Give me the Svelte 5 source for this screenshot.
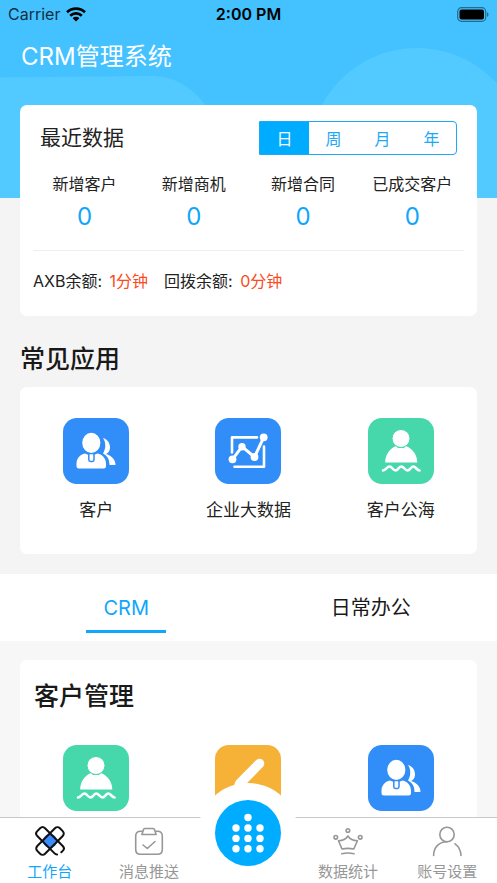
<script>
  const ranges = ['日', '周', '月', '年'];
  const stats = [
    { label: '新增客户', value: 0 },
    { label: '新增商机', value: 0 },
    { label: '新增合同', value: 0 },
    { label: '已成交客户', value: 0 }
  ];
  const apps = [
    { icon: 'customer', label: '客户' },
    { icon: 'chart', label: '企业大数据' },
    { icon: 'sea', label: '客户公海' }
  ];
  const tabs = ['CRM', '日常办公'];
  const manage = ['sea', 'pencil', 'customer'];
  const nav = [
    { icon: 'work', label: '工作台' },
    { icon: 'message', label: '消息推送' },
    { icon: 'dial' },
    { icon: 'crown', label: '数据统计' },
    { icon: 'user', label: '账号设置' }
  ];

  let range = $state('日');
  let tab = $state('CRM');
  let page = $state('work');
</script>

{#snippet appIcon(name)}
  <svg class="tile tile--{name}" viewBox="0 0 66 66" fill="none" aria-hidden="true">
    {#if name === 'customer'}
      <path d="M40 20c4 1 7 4.500 7 9.500 0 3-1.500 5.500-4 6.500 6 2 9.500 5.500 9.500 11H46.500c0-6-2-9-6.500-11.500 3-5 3-11 0-15.500z" fill="#fff" />
      <path d="M22 35.500c-5 1-8.500 5-8.500 10v2.500q0 2.500 2.500 2.500h24.500q2.500 0 2.500-2.500v-2.500c0-5-3.500-9-8.500-10q-6.500 3-12.500 0z" fill="#fff" />
      <rect x="25.800" y="35" width="5.200" height="8.400" rx="1.600" fill="#fff" stroke="#318df7" stroke-width="1.500" />
      <ellipse cx="28.300" cy="24.800" rx="9.800" ry="10.800" fill="#fff" stroke="#318df7" stroke-width="1.400" />
    {:else if name === 'chart'}
      <path d="M17 34.500V19.400H42M49 28.500v20.200H19.500" stroke="#fff" stroke-width="2.600" stroke-linecap="round" stroke-linejoin="round" />
      <path d="M17.500 41.300 27 28.700 39.500 39 48.700 19.300" stroke="#fff" stroke-width="3" />
      <g fill="#fff">
        <circle cx="17.500" cy="41.300" r="3.900" />
        <circle cx="27" cy="28.700" r="3.700" />
        <circle cx="39.500" cy="39" r="3.900" />
        <circle cx="48.700" cy="19.300" r="3.900" />
      </g>
    {:else if name === 'sea'}
      <path d="M17.200 44.500c0-8 4.500-14 11-16.500l2 2h5.600l2-2c6.500 2.500 11.500 8.500 11.500 16.500z" fill="#fff" />
      <circle cx="33" cy="20.500" r="9" fill="#fff" stroke="#46d7ab" />
      <path d="M15 52.500C18 52 19 48.500 21.500 48.500S25 52.500 27.500 52.500 31 48.500 33.300 48.500 37 52.500 39.500 52.500 43 48.500 45.300 48.500 48.500 52 51.500 52.500" stroke="#fff" stroke-width="2.600" stroke-linecap="round" />
    {:else}
      <path d="M41 15.200a4.800 4.800 0 0 1 7 6.600L30 40 17.500 46 20 37.500q.5-1.500 1.700-2.700z" fill="#fff" />
    {/if}
  </svg>
{/snippet}

{#snippet navIcon(name)}
  <svg class="nav__icon" viewBox="0 0 32 32" fill="none" stroke="#979797" stroke-width="1.600" stroke-linecap="round" stroke-linejoin="round" aria-hidden="true">
    {#if name === 'work'}
      <circle cx="16" cy="16" r="7" fill="#3b8cff" stroke="none" />
      <g stroke="#111" stroke-width="2">
        <rect x="0" y="10.500" width="32" height="11" rx="3.500" transform="rotate(-45 16 16)" />
        <path d="M30.500 20.500q-.8 1-2.500 1H3.500q-3.500 0-3.500-3.500v-4q0-3.500 3.500-3.500h25q3.500 0 3.500 3.500v2" transform="rotate(45 16 16)" />
      </g>
    {:else if name === 'message'}
      <path d="M9 6.300H7.500q-4.800 0-4.800 4.800v13.400q0 4.800 4.800 4.800h17q4.800 0 4.800-4.800V11.100q0-4.800-4.800-4.800H23" />
      <path d="M10.500 4.500q.3-1 1.300-1h8.400q1 0 1.300 1l1.600 5H8.900zM10 20l4.300 3.500 7.700-7" />
    {:else if name === 'crown'}
      <circle cx="15.900" cy="5.500" r="1.800" />
      <circle cx="3.800" cy="12.300" r="1.800" />
      <circle cx="28.200" cy="12.300" r="1.800" />
      <path d="M6.500 15.700q6.500 0 9.400-4.700 3 4.700 9.500 4.700l-3.600 8.300q-6-1.200-11.800 0zM9.800 28.700q6-1.500 12.200 0" />
    {:else}
      <circle cx="16" cy="9.500" r="7.200" />
      <path d="M2.600 30.500C2.600 22 8.500 16.700 16 16.700M24 18.800q5.700 4 6 11.700" />
    {/if}
  </svg>
{/snippet}

<div class="page">
  <svg class="backdrop" viewBox="0 0 497 198" preserveAspectRatio="none" aria-hidden="true">
    <path d="M0 77.500 150 76C174 76 191 86 206 106L260 198H0z" fill="#53caff" />
    <circle cx="417" cy="156" r="108" fill="#53caff" />
  </svg>

  <header class="header">
    <div class="status">
      <span class="status__carrier">
        Carrier
        <svg width="20" height="15" viewBox="0 0 20 15" aria-hidden="true">
          <g fill="none" stroke="#000" stroke-width="2.600">
            <path d="M1 5.200a13 13 0 0 1 18 0" />
            <path d="M4.200 8.700a8.300 8.300 0 0 1 11.600 0" />
          </g>
          <path d="M6.600 11.200a4.800 4.800 0 0 1 6.800 0L10 14.600z" />
        </svg>
      </span>
      <strong class="status__time">2:00 PM</strong>
      <svg class="status__battery" width="32" height="15" viewBox="0 0 32 15" aria-hidden="true">
        <rect x="0.700" y="0.700" width="28" height="13.600" rx="3.800" fill="none" stroke="#256b8c" stroke-width="1.200" />
        <rect x="2.500" y="2.500" width="24.500" height="10" rx="2" />
        <path d="M30 5.300q1.500.5 1.500 2.200T30 9.700z" fill="#256b8c" />
      </svg>
    </div>
    <h1 class="title">CRM管理系统</h1>
  </header>

  <main>
    <section class="card recent">
      <div class="recent__head">
        <h2 class="recent__title">最近数据</h2>
        <div class="range">
          {#each ranges as item}
            <button class="range__item" class:active={range === item} onclick={() => (range = item)}>{item}</button>
          {/each}
        </div>
      </div>
      <dl class="stats">
        {#each stats as stat}
          <div class="stats__item">
            <dt>{stat.label}</dt>
            <dd>{stat.value}</dd>
          </div>
        {/each}
      </dl>
      <div class="balance">
        <span>AXB余额: <em>1分钟</em></span>
        <span>回拨余额: <em>0分钟</em></span>
      </div>
    </section>

    <h2 class="heading heading--page">常见应用</h2>
    <section class="card apps">
      {#each apps as app}
        <button class="app">
          {@render appIcon(app.icon)}
          <span>{app.label}</span>
        </button>
      {/each}
    </section>

    <div class="tabs">
      {#each tabs as item}
        <button class="tabs__item" class:active={tab === item} onclick={() => (tab = item)}>
          <span>{item}</span>
        </button>
      {/each}
    </div>

    <div class="panel">
      <section class="card">
        <h2 class="heading heading--card">客户管理</h2>
        <div class="apps">
          {#each manage as icon}
            <button class="app">{@render appIcon(icon)}</button>
          {/each}
        </div>
      </section>
    </div>
  </main>

  <nav class="nav">
    {#each nav as item}
      {#if item.icon === 'dial'}
        <div class="nav__center">
          <button class="dial">
            <svg viewBox="0 0 66 66" fill="#fff" aria-hidden="true">
              <circle cx="33" cy="17.500" r="3.700" />
              {#each [28, 38.400, 48.800] as cy}
                {#each [21, 33, 45] as cx}
                  <circle {cx} {cy} r="3.700" />
                {/each}
              {/each}
            </svg>
          </button>
        </div>
      {:else}
        <button class="nav__item" class:active={page === item.icon} onclick={() => (page = item.icon)}>
          {@render navIcon(item.icon)}
          <span>{item.label}</span>
        </button>
      {/if}
    {/each}
  </nav>
</div>

<style>
  :global(html) {
    scrollbar-width: none;
  }

  :global(body) {
    margin: 0;
    background: #f4f4f4;
  }

  .page {
    position: relative;
    padding-bottom: 66px;
    font-family: Inter, "Noto Sans CJK SC", sans-serif;
    font-size: 16px;
    color: #222;
  }

  button {
    margin: 0;
    padding: 0;
    border: none;
    background: none;
    font: inherit;
    color: inherit;
    cursor: pointer;
  }

  h1, h2, dl, dd {
    margin: 0;
    font-weight: 400;
  }

  .backdrop {
    position: absolute;
    top: 0;
    left: 0;
    width: 100%;
    height: 198px;
    background: #43c2ff;
  }

  .header,
  main {
    position: relative;
  }

  .status {
    display: grid;
    grid-template-columns: 1fr auto 1fr;
    align-items: center;
    height: 28px;
    padding: 0 8px;
    color: #000;
  }

  .status__carrier {
    display: flex;
    align-items: center;
    gap: 6px;
    color: #12303f;
  }

  .status__time {
    font-weight: 600;
  }

  .status__battery {
    justify-self: end;
  }

  .title {
    padding: 0 21px;
    font-size: 24px;
    line-height: 58px;
    color: #fff;
  }

  .card {
    margin: 0 20px;
    border-radius: 7px;
    background: #fff;
  }

  .recent {
    margin-top: 19px;
    padding: 16px 10px 20px;
  }

  .recent__head {
    display: flex;
    justify-content: space-between;
    align-items: center;
    padding: 0 10px;
  }

  .recent__title {
    font-size: 21px;
    line-height: 34px;
  }

  .range {
    display: grid;
    grid-template-columns: repeat(4, 1fr);
    box-sizing: border-box;
    width: 198px;
    height: 34px;
    border: 1px solid #1ea8f8;
    border-radius: 0 4px 4px 0;
    color: #1ea8f8;
  }

  .range__item.active {
    background: #00acff;
    color: #fff;
  }

  .stats {
    display: grid;
    grid-template-columns: repeat(4, 1fr);
    padding: 15px 0;
    text-align: center;
  }

  .stats dt {
    line-height: 28px;
    white-space: nowrap;
  }

  .stats dd {
    font-size: 24px;
    line-height: 37px;
    color: #10a6fb;
  }

  .balance {
    display: flex;
    gap: 16px;
    margin: 0 3px;
    padding-top: 16px;
    border-top: 1px solid #eee;
    line-height: 29px;
  }

  .balance em {
    margin-left: 3px;
    font-style: normal;
    color: #fb4a1d;
  }

  .heading {
    font-size: 25px;
    font-weight: 500;
    color: #191919;
  }

  .heading--page {
    padding: 15px 20px 0;
    line-height: 56px;
  }

  .heading--card {
    padding: 18px 14px 0;
    line-height: 36px;
  }

  .apps {
    display: grid;
    grid-template-columns: repeat(3, 1fr);
    padding: 31px 0;
  }

  .app {
    display: flex;
    flex-direction: column;
    align-items: center;
    gap: 13px;
    font-size: 17px;
    line-height: 26px;
  }

  .tile {
    width: 66px;
    height: 66px;
    border-radius: 14px;
    background: #318df7;
  }

  .tile--sea {
    background: #46d7ab;
  }

  .tile--pencil {
    background: #f5b236;
  }

  .tabs {
    display: grid;
    grid-template-columns: repeat(2, 1fr);
    height: 67px;
    margin-top: 20px;
    padding: 0 4px;
    background: #fff;
    font-size: 20px;
    color: #191919;
  }

  .tabs__item {
    display: flex;
    justify-content: center;
  }

  .tabs__item span {
    box-sizing: border-box;
    width: 80px;
    height: 59px;
    line-height: 68px;
    white-space: nowrap;
  }

  .tabs__item.active span {
    border-bottom: 3px solid #10a6fb;
    color: #10a6fb;
  }

  .panel {
    padding: 19px 0 20px;
    background: #f7f7f7;
  }

  .nav {
    position: fixed;
    right: 0;
    bottom: 0;
    left: 0;
    display: grid;
    grid-template-columns: repeat(5, 1fr);
    box-sizing: border-box;
    height: 66px;
    border-top: 1px solid #c8c8c8;
    background: #fff;
    font-size: 15px;
    color: #979797;
  }

  .nav__item {
    display: flex;
    flex-direction: column;
    align-items: center;
    gap: 5px;
    padding-top: 7px;
    line-height: 20px;
  }

  .nav__item.active {
    color: #10a6fb;
  }

  .nav__icon {
    width: 32px;
    height: 32px;
  }

  .nav__center {
    position: relative;
  }

  /* round button rising above the bar, with its white rim */
  .dial {
    position: absolute;
    top: -35px;
    left: 50%;
    box-sizing: border-box;
    width: 100px;
    height: 100px;
    margin-left: -50px;
    padding: 17px;
    border-radius: 50%;
    background: #fff;
  }

  .dial svg {
    display: block;
    width: 66px;
    height: 66px;
    border-radius: 50%;
    background: #00acff;
  }
</style>
